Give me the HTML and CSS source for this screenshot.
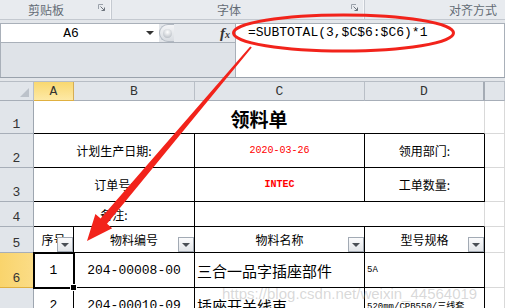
FILE: index.html
```html
<!DOCTYPE html>
<html>
<head>
<meta charset="utf-8">
<link rel="stylesheet" href="styles.css">
</head>
<body>
<div class="ribbon">
  <div class="grp g1"><span class="lbl">剪贴板</span><svg class="launch" width="8" height="8" viewBox="0 0 8 8"><path d="M0.5 5V0.5H5" fill="none" stroke="#9aa1aa"/><path d="M2.5 2.5L6.5 6.5M3.5 6.5H6.5V3.5" fill="none" stroke="#6d747d"/></svg></div>
  <div class="grp g2"><span class="lbl">字体</span><svg class="launch" width="8" height="8" viewBox="0 0 8 8"><path d="M0.5 5V0.5H5" fill="none" stroke="#9aa1aa"/><path d="M2.5 2.5L6.5 6.5M3.5 6.5H6.5V3.5" fill="none" stroke="#6d747d"/></svg></div>
  <div class="grp g3"><span class="lbl">对齐方式</span></div>
</div>
<div class="fbar">
  <div class="fleft">
    <div class="namerow">
      <div class="namebox"><span class="nbtext">A6</span><span class="dd"></span></div>
      <div class="grip"><span class="dot"></span></div>
      <div class="fx">f<span class="fxx">x</span></div>
    </div>
    <div class="fill"></div>
  </div>
  <div class="formula">=SUBTOTAL(3,$C$6:$C6)*1</div>
</div>
<div class="band"></div>
<div class="sheet">
  <div class="c hd corner"></div>
  <div class="c hd ch on">A</div>
  <div class="c hd ch">B</div>
  <div class="c hd ch">C</div>
  <div class="c hd ch dh">D</div>
  <div class="c hd ch"></div>

  <div class="c hd rh">1</div>
  <div class="c s4 title bb">领料单</div>
  <div class="c"></div>

  <div class="c hd rh">2</div>
  <div class="c s2 b">计划生产日期:</div>
  <div class="c b red mono10">2020-03-26</div>
  <div class="c b">领用部门:</div>
  <div class="c"></div>

  <div class="c hd rh">3</div>
  <div class="c s2 b">订单号:</div>
  <div class="c b red mono10 bold">INTEC</div>
  <div class="c b">工单数量:</div>
  <div class="c"></div>

  <div class="c hd rh">4</div>
  <div class="c s2 b">备注:</div>
  <div class="c s2 bb"></div>
  <div class="c"></div>

  <div class="c hd rh">5</div>
  <div class="c b">序号<span class="flt"></span></div>
  <div class="c b">物料编号<span class="flt"></span></div>
  <div class="c b">物料名称<span class="flt"></span></div>
  <div class="c b">型号规格<span class="flt"></span></div>
  <div class="c"></div>

  <div class="c hd rh on">6</div>
  <div class="c b mono13 selc">1<span class="sel"></span><span class="handle"></span></div>
  <div class="c b mono13">204-00008-00</div>
  <div class="c b big left">三合一品字插座部件</div>
  <div class="c b small left">5A</div>
  <div class="c"></div>

  <div class="c hd rh">7</div>
  <div class="c b mono13">2</div>
  <div class="c b mono13">204-00010-09</div>
  <div class="c b big left">插座开关线束</div>
  <div class="c b small left">520mm/CPB550/三线套</div>
  <div class="c"></div>
</div>
<div class="watermark">https://blog.csdn.net/weixin_44564019</div>
<svg class="overlay" width="505" height="308" viewBox="0 0 505 308">
  <ellipse cx="343.5" cy="33" rx="110" ry="18" fill="none" stroke="#f2231b" stroke-width="3"/>
  <polygon fill="#f2231b" points="251.8,47.6 250.2,46.4 100.6,218.4 95.4,214 87,241 112.2,228.2 107,223.8"/>
</svg>
</body>
</html>
```
FILE: styles.css
```css
* { box-sizing: border-box; }
body {
  margin: 0;
  width: 505px;
  height: 308px;
  overflow: hidden;
  position: relative;
  background: #e3e6ea;
  font-family: "Noto Sans CJK SC", sans-serif;
}
.ribbon {
  height: 20px;
  display: flex;
  background: #e8ebef;
  border-bottom: 1px solid #c4c9d0;
}
.grp {
  display: flex;
  align-items: center;
  height: 19px;
  border-right: 1px solid #c5cad1;
  box-shadow: inset -1px 0 0 #f6f7f9;
}
.g1 { width: 112px; padding-left: 28px; }
.g2 { width: 253px; padding-left: 105px; }
.g3 { flex: 1; padding-left: 84px; border-right: none; box-shadow: none; }
.lbl {
  font-size: 12px;
  line-height: 19px;
  color: #646b75;
  letter-spacing: 0;
}
.launch { margin-left: auto; margin-right: 5px; margin-top: -4px; }

.fbar {
  margin-top: 3px;
  height: 55px;
  display: flex;
  border-bottom: 1px solid #9aa2ac;
}
.fleft {
  width: 235px;
  display: flex;
  flex-direction: column;
  border-left: 1px solid #a9b0b9;
}
.namerow {
  height: 20px;
  display: flex;
  border-top: 1px solid #a9b0b9;
  border-bottom: 1px solid #a9b0b9;
}
.namebox {
  width: 158px;
  background: #fff;
  display: flex;
  align-items: center;
  font-family: "Liberation Mono", monospace;
  font-size: 13px;
  color: #000;
}
.nbtext { width: 140px; text-align: center; }
.dd {
  width: 0;
  height: 0;
  border-left: 4px solid transparent;
  border-right: 4px solid transparent;
  border-top: 4px solid #333;
  margin-left: 5px;
}
.grip {
  width: 15px;
  height: 18px;
  border: 1px solid #b3bac3;
  border-right: none;
  border-radius: 10px 0 0 10px;
  background: linear-gradient(#f4f5f7, #d8dce1);
  display: flex;
  align-items: center;
  justify-content: center;
}
.dot {
  width: 9px;
  height: 9px;
  border-radius: 50%;
  background: radial-gradient(circle at 50% 35%, #ffffff, #c3c8ce 70%, #a7aeb6);
}
.fx {
  flex: 1;
  background: #e6e9ed;
  text-align: right;
  padding-right: 5px;
  font-family: "Liberation Serif", serif;
  font-style: italic;
  font-weight: bold;
  font-size: 15px;
  line-height: 18px;
  color: #333;
}
.fxx { font-size: 10px; }
.fill { flex: 1; background: #dfe3e8; }
.formula {
  flex: 1;
  background: #fff;
  border: 1px solid #a9b0b9;
  border-bottom: none;
  padding-left: 12px;
  font-family: "Liberation Mono", monospace;
  font-size: 13px;
  line-height: 18px;
  color: #000;
}
.band {
  height: 4px;
  background: #e3e6ea;
  border-bottom: 1px solid #b7bdc5;
}

.sheet {
  display: grid;
  grid-template-columns: 34px 40px 121px 170px 120px 20px;
  grid-template-rows: 19px 33px 34px 34px 25px 26px 35px 35px;
  background: #fff;
}
.c {
  position: relative;
  border-right: 1px solid #d9d9d9;
  border-bottom: 1px solid #d9d9d9;
  display: flex;
  align-items: center;
  justify-content: center;
  font-size: 12px;
  color: #000;
  overflow: hidden;
  white-space: nowrap;
}
.hd {
  background: #e1e5ea;
  border-right-color: #b9bfc7;
  border-bottom-color: #a7aeb8;
  font-family: "Liberation Mono", monospace;
  font-size: 13px;
  color: #333;
}
.ch { padding-top: 1px; }
.dh { border-right: 2px solid #a4abb4; }
.rh { align-items: flex-end; padding-bottom: 1px; border-right-color: #9ea6b0; }
.hd.on {
  background: linear-gradient(#f9d870, #fde9a6);
  border-bottom-color: #e0b040;
  border-right-color: #d5ad55;
}
.rh.on { background: linear-gradient(90deg, #f9d46c, #fbdc86); }
.corner::after {
  content: "";
  position: absolute;
  right: 4px;
  bottom: 3px;
  width: 9px;
  height: 9px;
  background: #bcc2ca;
  clip-path: polygon(100% 0, 100% 100%, 0 100%);
}
.s2 { grid-column: span 2; }
.s4 { grid-column: span 4; }
.b { border-right-color: #000; border-bottom-color: #000; }
.bb { border-bottom-color: #000; }
.title {
  font-size: 19px;
  font-weight: bold;
  padding-top: 3px;
}
.red { color: #ff0000; }
.mono10 { font-family: "Liberation Mono", monospace; font-size: 10px; }
.bold { font-weight: bold; }
.mono13 { font-family: "Liberation Mono", monospace; font-size: 13px; }
.big { font-size: 15px; }
.small { font-family: "Liberation Mono", "Noto Sans CJK SC", monospace; font-size: 9px; }
.left { justify-content: flex-start; padding-left: 2px; }
.flt {
  position: absolute;
  right: 0;
  bottom: 0;
  width: 16px;
  height: 15px;
  border: 1px solid #a2aab4;
  background: linear-gradient(#fbfbfc, #e2e5e9);
  display: flex;
  align-items: center;
  justify-content: center;
}
.flt::after {
  content: "";
  width: 0;
  height: 0;
  border-left: 4px solid transparent;
  border-right: 4px solid transparent;
  border-top: 4px solid #4a4f55;
}
.selc { overflow: visible; }
.sel {
  position: absolute;
  top: -1px;
  left: -1px;
  right: -2px;
  bottom: -2px;
  border: 2px solid #000;
  z-index: 2;
}
.handle {
  position: absolute;
  right: -4px;
  bottom: -4px;
  width: 7px;
  height: 7px;
  background: #000;
  border: 1px solid #fff;
  z-index: 3;
}
.watermark {
  position: absolute;
  left: 222px;
  top: 285px;
  font-family: "Liberation Sans", sans-serif;
  font-size: 15px;
  color: rgba(170, 170, 170, 0.45);
  z-index: 4;
}
.overlay {
  position: absolute;
  left: 0;
  top: 0;
  z-index: 5;
}
```
